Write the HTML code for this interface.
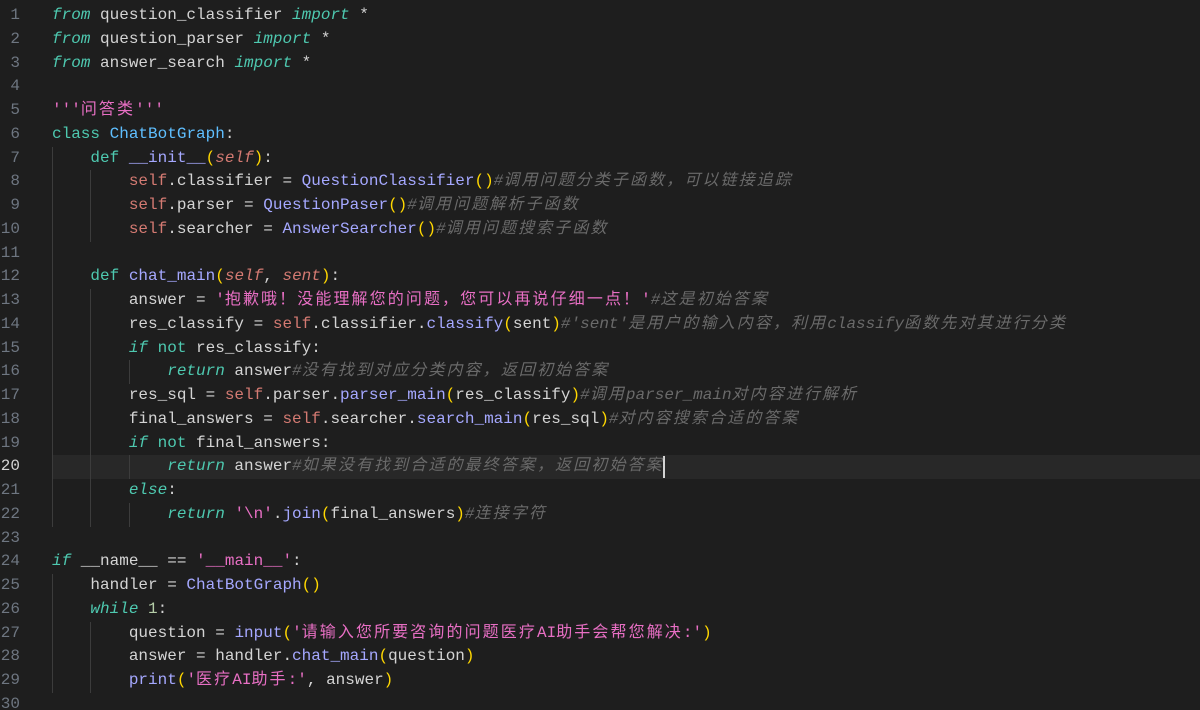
<!DOCTYPE html>
<html><head><meta charset="utf-8"><style>
html,body{margin:0;padding:0;background:#1e1e1e;width:1200px;height:710px;overflow:hidden}
body{font-family:"Liberation Mono","Noto Sans CJK SC",monospace;font-size:16px;color:#d4d4d4;position:relative}
.l{position:absolute;left:52px;height:23.75px;line-height:23.75px;white-space:pre}
.n{position:absolute;left:0;width:20px;text-align:right;color:#6e7681;height:23.75px;line-height:23.75px}
.c{letter-spacing:2.1px}
.k{color:#4ec9b0}.ki{color:#4ec9b0;font-style:italic}
.s{color:#d47a72}.pi{color:#d47a72;font-style:italic}
.f{color:#a5a8ff}.cl{color:#5fbfff}.st{color:#e86fc4}
.cm{color:#6a6a6a;font-style:italic}.p{color:#ffd700}.num{color:#b5cea8}
.g{position:absolute;width:1px;background:#3c3c3c}
.hl{position:absolute;left:52px;right:0;background:#282828}
</style></head><body>
<div class="hl" style="top:455px;height:23.75px"></div>
<div class="g" style="left:52px;top:146.5px;height:380px"></div>
<div class="g" style="left:90px;top:170.25px;height:71.25px"></div>
<div class="g" style="left:90px;top:289px;height:237.5px"></div>
<div class="g" style="left:129px;top:360.25px;height:23.75px"></div>
<div class="g" style="left:129px;top:455.25px;height:23.75px"></div>
<div class="g" style="left:129px;top:503px;height:23.75px"></div>
<div class="g" style="left:52px;top:574px;height:118.75px"></div>
<div class="g" style="left:90px;top:621.5px;height:71.25px"></div>
<div style="position:absolute;left:663px;top:456px;width:2px;height:22px;background:#d4d4d4"></div>

<div class="n" style="top:4px">1</div>
<div class="n" style="top:27.75px">2</div>
<div class="n" style="top:51.5px">3</div>
<div class="n" style="top:75.25px">4</div>
<div class="n" style="top:99px">5</div>
<div class="n" style="top:122.75px">6</div>
<div class="n" style="top:146.5px">7</div>
<div class="n" style="top:170.25px">8</div>
<div class="n" style="top:194px">9</div>
<div class="n" style="top:217.75px">10</div>
<div class="n" style="top:241.5px">11</div>
<div class="n" style="top:265.25px">12</div>
<div class="n" style="top:289px">13</div>
<div class="n" style="top:312.75px">14</div>
<div class="n" style="top:336.5px">15</div>
<div class="n" style="top:360.25px">16</div>
<div class="n" style="top:384px">17</div>
<div class="n" style="top:407.75px">18</div>
<div class="n" style="top:431.5px">19</div>
<div class="n" style="top:455.25px;color:#d4d4d4">20</div>
<div class="n" style="top:479px">21</div>
<div class="n" style="top:502.75px">22</div>
<div class="n" style="top:526.5px">23</div>
<div class="n" style="top:550.25px">24</div>
<div class="n" style="top:574px">25</div>
<div class="n" style="top:597.75px">26</div>
<div class="n" style="top:621.5px">27</div>
<div class="n" style="top:645.25px">28</div>
<div class="n" style="top:669px">29</div>
<div class="n" style="top:692.75px">30</div>

<div class="l" style="top:4px"><span class="ki">from</span> question_classifier <span class="ki">import</span> *</div>
<div class="l" style="top:27.75px"><span class="ki">from</span> question_parser <span class="ki">import</span> *</div>
<div class="l" style="top:51.5px"><span class="ki">from</span> answer_search <span class="ki">import</span> *</div>
<div class="l" style="top:99px"><span class="st">'''<span class="c">问答类</span>'''</span></div>
<div class="l" style="top:122.75px"><span class="k">class</span> <span class="cl">ChatBotGraph</span>:</div>
<div class="l" style="top:146.5px">    <span class="k">def</span> <span class="f">__init__</span><span class="p">(</span><span class="pi">self</span><span class="p">)</span>:</div>
<div class="l" style="top:170.25px">        <span class="s">self</span>.classifier = <span class="f">QuestionClassifier</span><span class="p">()</span><span class="cm">#<span class="c">调用问题分类子函数，可以链接追踪</span></span></div>
<div class="l" style="top:194px">        <span class="s">self</span>.parser = <span class="f">QuestionPaser</span><span class="p">()</span><span class="cm">#<span class="c">调用问题解析子函数</span></span></div>
<div class="l" style="top:217.75px">        <span class="s">self</span>.searcher = <span class="f">AnswerSearcher</span><span class="p">()</span><span class="cm">#<span class="c">调用问题搜索子函数</span></span></div>
<div class="l" style="top:265.25px">    <span class="k">def</span> <span class="f">chat_main</span><span class="p">(</span><span class="pi">self</span>, <span class="pi">sent</span><span class="p">)</span>:</div>
<div class="l" style="top:289px">        answer = <span class="st">'<span class="c">抱歉哦！没能理解您的问题，您可以再说仔细一点！</span>'</span><span class="cm">#<span class="c">这是初始答案</span></span></div>
<div class="l" style="top:312.75px">        res_classify = <span class="s">self</span>.classifier.<span class="f">classify</span><span class="p">(</span>sent<span class="p">)</span><span class="cm">#'sent'<span class="c">是用户的输入内容，利用</span>classify<span class="c">函数先对其进行分类</span></span></div>
<div class="l" style="top:336.5px">        <span class="ki">if</span> <span class="k">not</span> res_classify:</div>
<div class="l" style="top:360.25px">            <span class="ki">return</span> answer<span class="cm">#<span class="c">没有找到对应分类内容，返回初始答案</span></span></div>
<div class="l" style="top:384px">        res_sql = <span class="s">self</span>.parser.<span class="f">parser_main</span><span class="p">(</span>res_classify<span class="p">)</span><span class="cm">#<span class="c">调用</span>parser_main<span class="c">对内容进行解析</span></span></div>
<div class="l" style="top:407.75px">        final_answers = <span class="s">self</span>.searcher.<span class="f">search_main</span><span class="p">(</span>res_sql<span class="p">)</span><span class="cm">#<span class="c">对内容搜索合适的答案</span></span></div>
<div class="l" style="top:431.5px">        <span class="ki">if</span> <span class="k">not</span> final_answers:</div>
<div class="l" style="top:455.25px">            <span class="ki">return</span> answer<span class="cm">#<span class="c">如果没有找到合适的最终答案，返回初始答案</span></span></div>
<div class="l" style="top:479px">        <span class="ki">else</span>:</div>
<div class="l" style="top:502.75px">            <span class="ki">return</span> <span class="st">'\n'</span>.<span class="f">join</span><span class="p">(</span>final_answers<span class="p">)</span><span class="cm">#<span class="c">连接字符</span></span></div>
<div class="l" style="top:550.25px"><span class="ki">if</span> __name__ == <span class="st">'__main__'</span>:</div>
<div class="l" style="top:574px">    handler = <span class="f">ChatBotGraph</span><span class="p">()</span></div>
<div class="l" style="top:597.75px">    <span class="ki">while</span> <span class="num">1</span>:</div>
<div class="l" style="top:621.5px">        question = <span class="f">input</span><span class="p">(</span><span class="st">'<span class="c">请输入您所要咨询的问题医疗</span>AI<span class="c">助手会帮您解决</span>:'</span><span class="p">)</span></div>
<div class="l" style="top:645.25px">        answer = handler.<span class="f">chat_main</span><span class="p">(</span>question<span class="p">)</span></div>
<div class="l" style="top:669px">        <span class="f">print</span><span class="p">(</span><span class="st">'<span class="c">医疗</span>AI<span class="c">助手</span>:'</span>, answer<span class="p">)</span></div>
</body></html>
